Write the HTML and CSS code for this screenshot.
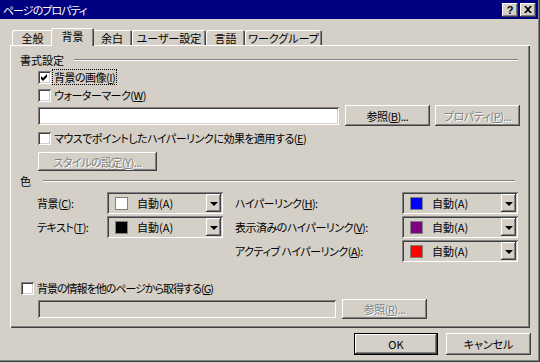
FILE: index.html
```html
<!DOCTYPE html>
<html lang="ja">
<head>
<meta charset="utf-8">
<title>ページのプロパティ</title>
<link rel="stylesheet" href="styles.css">
</head>
<body>
<div class="window">
  <div class="titlebar">
    <span class="title">ページのプロパティ</span>
    <div class="tb-buttons">
      <span class="tb-btn help">?</span>
      <span class="tb-btn close"><svg width="8" height="7" viewBox="0 0 8 7"><path d="M0 0h2l2 2 2-2h2L5 3.5 8 7H6L4 5 2 7H0l3-3.5z" fill="#000"/></svg></span>
    </div>
  </div>
  <div class="client">
    <div class="tabs">
      <div class="tab t-general">全般</div>
      <div class="tab active">背景</div>
      <div class="tab t-margin">余白</div>
      <div class="tab t-user">ユーザー設定</div>
      <div class="tab t-lang">言語</div>
      <div class="tab t-work">ワークグループ</div>
    </div>
    <div class="panel">
      <div class="group-head"><span>書式設定</span><span class="etch"></span></div>
      <div class="indent">
        <div class="check"><span class="box"><svg width="7" height="7" viewBox="0 0 7 7"><path d="M0 2l2 2 4-4v3L2 7 0 5z" fill="#000"/></svg></span><span class="focus">背景の画像(<u>I</u>)</span></div>
        <div class="check"><span class="box"></span><span>ウォーターマーク(<u>W</u>)</span></div>
        <div class="field-row">
          <span class="field f-image"></span>
          <span class="btn b-browse">参照(<u>B</u>)...</span>
          <span class="btn b-prop disabled">プロパティ(<u>P</u>)...</span>
        </div>
        <div class="check c-hover"><span class="box"></span><span>マウスでポイントしたハイパーリンクに効果を適用する(<u>E</u>)</span></div>
        <span class="btn b-style disabled">スタイルの設定(<u>Y</u>)...</span>
      </div>
      <div class="group-head g-color"><span>色</span><span class="etch"></span></div>
      <div class="colors">
        <div class="col col-left">
          <div class="crow"><span class="clabel l-left">背景(<u>C</u>):</span><div class="combo"><span class="swatch sw-white"></span><span class="ctext">自動(A)</span><span class="drop"><span class="arrow"></span></span></div></div>
          <div class="crow"><span class="clabel l-left">テキスト(<u>T</u>):</span><div class="combo"><span class="swatch sw-black"></span><span class="ctext">自動(A)</span><span class="drop"><span class="arrow"></span></span></div></div>
        </div>
        <div class="col col-right">
          <div class="crow"><span class="clabel l-right">ハイパーリンク(<u>H</u>):</span><div class="combo"><span class="swatch sw-blue"></span><span class="ctext">自動(A)</span><span class="drop"><span class="arrow"></span></span></div></div>
          <div class="crow"><span class="clabel l-right">表示済みのハイパーリンク(<u>V</u>):</span><div class="combo"><span class="swatch sw-purple"></span><span class="ctext">自動(A)</span><span class="drop"><span class="arrow"></span></span></div></div>
          <div class="crow"><span class="clabel l-right">アクティブ ハイパーリンク(<u>A</u>):</span><div class="combo"><span class="swatch sw-red"></span><span class="ctext">自動(A)</span><span class="drop"><span class="arrow"></span></span></div></div>
        </div>
      </div>
      <div class="check c-other"><span class="box"></span><span class="tight">背景の情報を他のページから取得する(<u>G</u>)</span></div>
      <div class="field-row r-other">
        <span class="field disabled-field f-other"></span>
        <span class="btn b-browse2 disabled">参照(<u>R</u>)...</span>
      </div>
    </div>
    <div class="footer">
      <span class="btn default b-ok">OK</span>
      <span class="btn b-cancel">キャンセル</span>
    </div>
  </div>
</div>
</body>
</html>
```
FILE: styles.css
```css
* { box-sizing: border-box; }
html, body { margin: 0; padding: 0; }
body {
  width: 540px;
  height: 363px;
  overflow: hidden;
  background: #d4d0c8;
  font-family: "Noto Sans CJK JP", "Liberation Sans", sans-serif;
  font-size: 11px;
  line-height: 14px;
  letter-spacing: -0.5px;
  color: #000;
  font-feature-settings: "palt" 1;
}
u { text-decoration: underline; text-underline-offset: 1px; }

.window {
  width: 540px;
  height: 362px;
  border-right: 1px solid #404040;
  border-bottom: 1px solid #404040;
  box-shadow: inset -1px -1px #808080;
  display: flex;
  flex-direction: column;
}

.titlebar {
  height: 19px;
  margin-right: 1px;
  background: #000080;
  color: #fff;
  display: flex;
  align-items: center;
  justify-content: space-between;
  padding: 0 2px 0 3px;
}
.title { font-size: 11px; letter-spacing: -1px; }
.tb-buttons { display: flex; gap: 1px; }
.tb-btn {
  width: 16px;
  height: 14px;
  background: #d4d0c8;
  color: #000;
  display: flex;
  align-items: center;
  justify-content: center;
  font-family: "Liberation Sans", sans-serif;
  font-weight: bold;
  font-size: 11px;
  letter-spacing: 0;
  box-shadow: inset -1px -1px #404040, inset 1px 1px #fff, inset -2px -2px #808080;
}
.tb-btn.close { margin-left: 1px; }

.client {
  padding: 0 8px 0 10px;
  display: flex;
  flex-direction: column;
}

.tabs {
  margin-top: 9px;
  height: 17px;
  display: flex;
  align-items: flex-end;
  margin-left: 2px;
}
.tab {
  height: 15px;
  padding: 1px 0 0 0;
  text-align: center;
  white-space: nowrap;
  letter-spacing: 0;
  box-shadow: inset 1px 1px #fff, inset -1px 0 #404040, inset -2px 0 #808080;
  border-top-left-radius: 2px;
  border-top-right-radius: 2px;
}
.t-general { width: 41px; }
.tab.active {
  width: 43px;
  height: 18px;
  margin: 0 -2px -1px -2px;
  position: relative;
  z-index: 2;
  background: #d4d0c8;
  padding-top: 1px;
}
.t-margin { width: 40px; }
.t-user { width: 74px; }
.t-lang { width: 39px; }
.t-work { width: 77px; }

.panel {
  position: relative;
  z-index: 1;
  width: 520px;
  height: 283px;
  padding: 8px 12px 0 10px;
  box-shadow: inset 1px 1px #fff, inset -1px -1px #404040, inset -2px -2px #808080;
}

.group-head {
  height: 14px;
  display: flex;
  align-items: center;
  gap: 10px;
  letter-spacing: 0;
}
.etch {
  flex: 1;
  height: 2px;
  border-top: 1px solid #808080;
  border-bottom: 1px solid #fff;
}
.g-color { margin-top: 3px; gap: 12px; padding-right: 3px; }

.indent { margin-left: 18px; display: flex; flex-direction: column; align-items: flex-start; }
.group-head + .indent { margin-top: 1px; }

.check {
  height: 18px;
  display: flex;
  align-items: center;
  gap: 3px;
  white-space: nowrap;
}
.tight { letter-spacing: -1px; }
.box {
  width: 13px;
  height: 13px;
  flex: none;
  background: #fff;
  display: flex;
  align-items: center;
  justify-content: center;
  box-shadow: inset 1px 1px #808080, inset -1px -1px #fff, inset 2px 2px #404040, inset -2px -2px #d4d0c8;
}
.focus { outline: 1px dotted #000; outline-offset: 0; padding: 0 1px; margin-left: -1px; }
.c-hover { margin-top: 3px; }

.field-row {
  height: 21px;
  display: flex;
  align-items: center;
  margin-top: 1px;
}
.field {
  height: 18px;
  background: #fff;
  box-shadow: inset 1px 1px #808080, inset -1px -1px #fff, inset 2px 2px #404040, inset -2px -2px #d4d0c8;
}
.disabled-field { background: #d4d0c8; }
.f-image { width: 301px; }
.f-other { width: 298px; }

.btn {
  height: 21px;
  display: flex;
  align-items: center;
  justify-content: center;
  background: #d4d0c8;
  white-space: nowrap;
  box-shadow: inset -1px -1px #404040, inset 1px 1px #fff, inset -2px -2px #808080;
}
.btn.disabled { color: #808080; text-shadow: 1px 1px 0 #fff; }
.b-browse { width: 85px; margin-left: 6px; }
.b-prop { width: 85px; margin-left: 5px; }
.b-style { width: 119px; height: 19px; margin-top: 5px; }

.colors {
  margin-top: 4px;
  margin-left: 17px;
  display: flex;
  gap: 12px;
}
.col { display: flex; flex-direction: column; gap: 2px; }
.crow { height: 22px; display: flex; align-items: center; }
.clabel { white-space: nowrap; }
.l-left { width: 70px; }
.l-right { width: 167px; }
.combo {
  width: 116px;
  height: 22px;
  display: flex;
  align-items: center;
  padding: 2px;
  letter-spacing: 0;
  box-shadow: inset 1px 1px #808080, inset -1px -1px #fff, inset 2px 2px #404040, inset -2px -2px #d4d0c8;
}
.swatch {
  width: 13px;
  height: 13px;
  margin-left: 6px;
  border: 1px solid #808080;
  flex: none;
}
.sw-white { background: #fff; }
.sw-black { background: #000; }
.sw-blue { background: #0000ff; }
.sw-purple { background: #800080; }
.sw-red { background: #ff0000; }
.ctext { margin-left: 9px; flex: 1; }
.drop {
  width: 15px;
  height: 18px;
  display: flex;
  align-items: center;
  justify-content: center;
  box-shadow: inset -1px -1px #404040, inset 1px 1px #fff, inset -2px -2px #808080;
}
.arrow {
  width: 0;
  height: 0;
  border-left: 4px solid transparent;
  border-right: 4px solid transparent;
  border-top: 4px solid #000;
  margin-top: 1px;
}

.c-other { margin-top: 17px; margin-left: 1px; }
.r-other { margin-left: 18px; margin-top: 1px; }
.b-browse2 { width: 85px; height: 20px; margin-left: 6px; }

.footer {
  margin-top: 5px;
  display: flex;
  justify-content: flex-end;
  gap: 8px;
  letter-spacing: 0;
}
.b-ok { width: 84px; height: 22px; }
.b-cancel { width: 85px; height: 22px; }
.btn.default {
  box-shadow: inset 0 0 0 1px #000, inset -2px -2px #404040, inset 2px 2px #fff, inset -3px -3px #808080;
}
```
